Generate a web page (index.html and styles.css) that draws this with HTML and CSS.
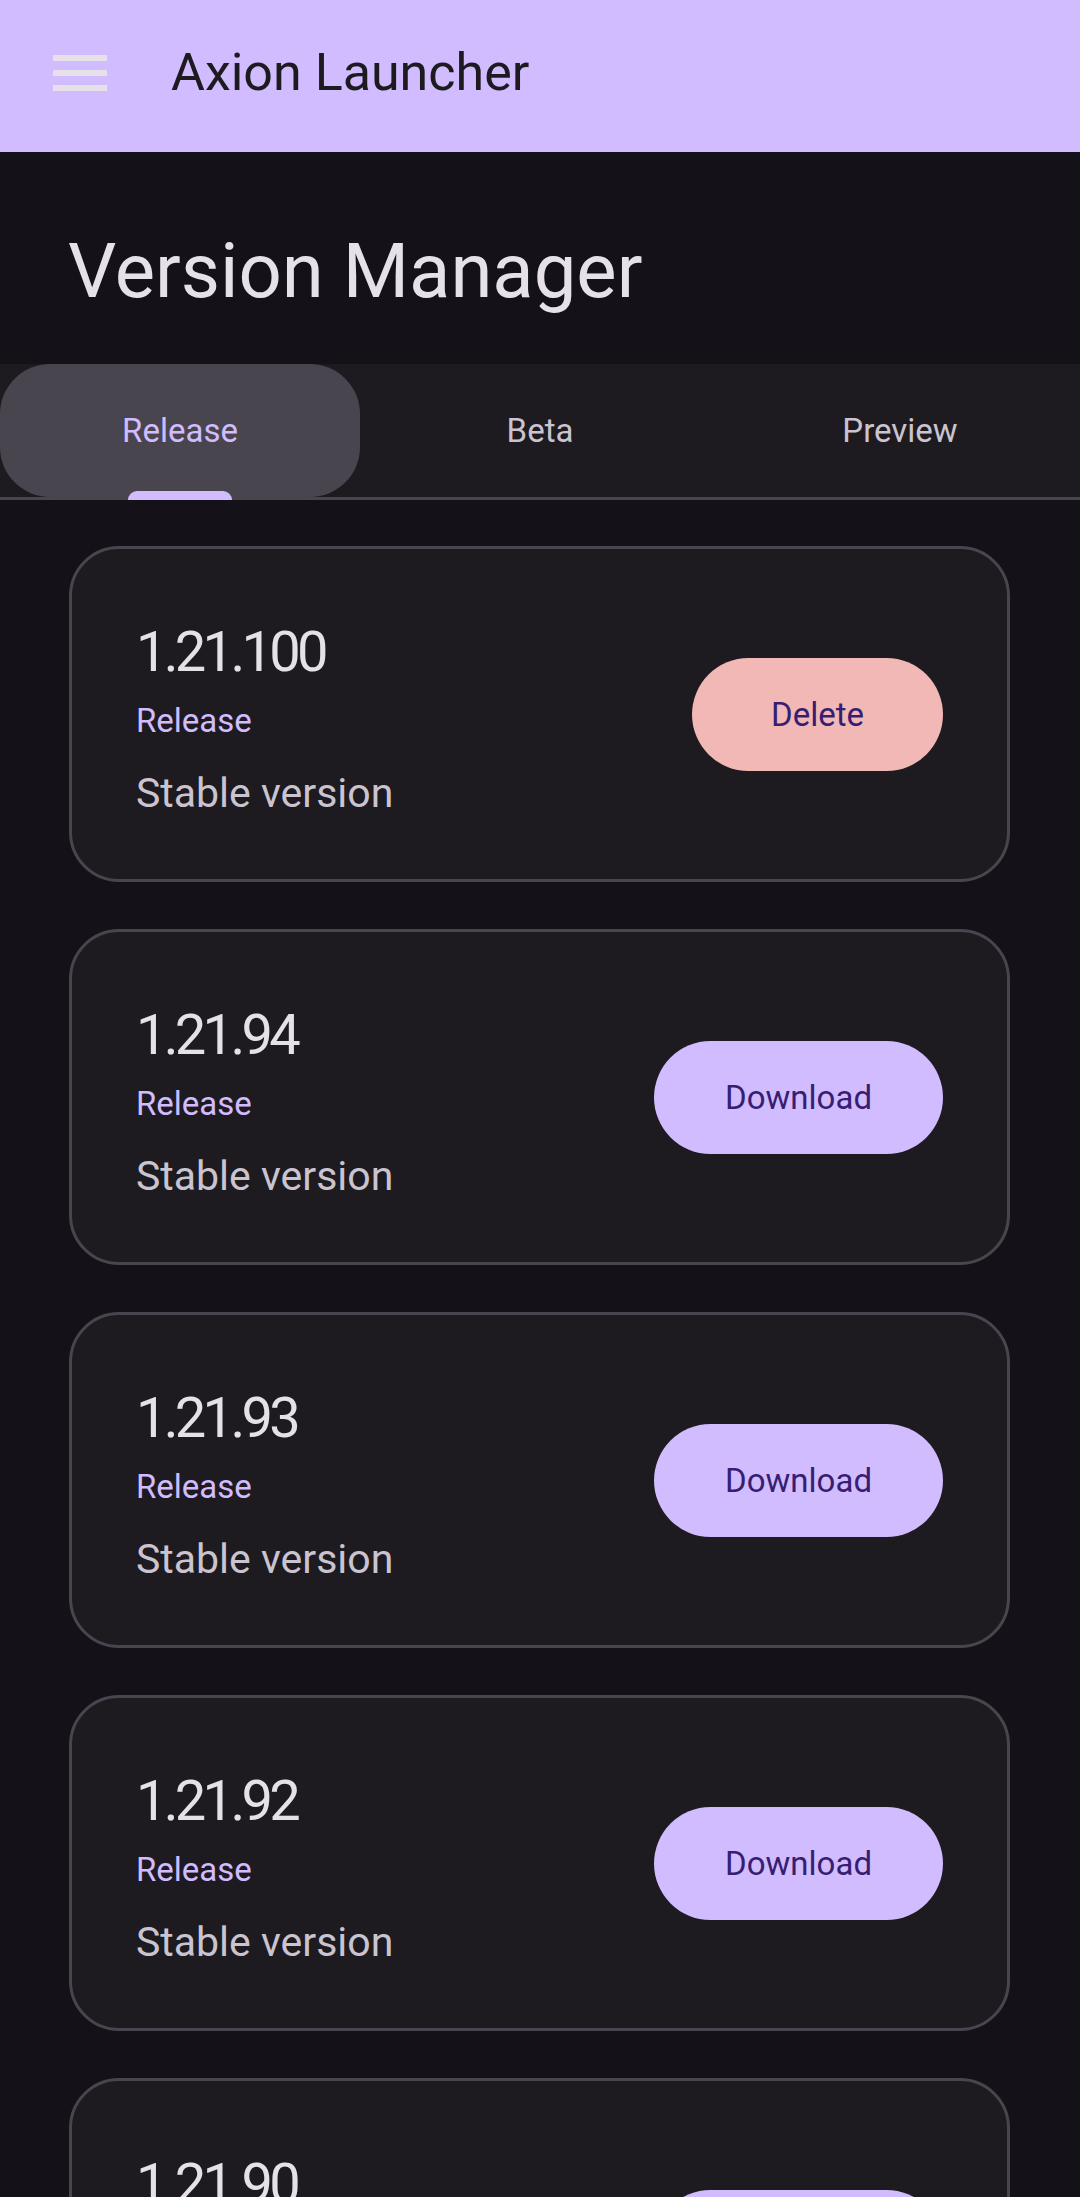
FILE: index.html
```html
<!DOCTYPE html>
<html lang="en">
<head>
    <meta charset="UTF-8">
    <meta name="viewport" content="width=device-width, initial-scale=1.0">
    <title>Axion Launcher</title>
    <link rel="stylesheet" href="styles.css">
</head>
<body>
    <header class="app-bar">
        <button class="menu-btn">
            <svg viewBox="0 0 24 24" width="72" height="72">
                <rect x="3" y="6" width="18" height="2" fill="#e6e0e9"/>
                <rect x="3" y="11" width="18" height="2" fill="#e6e0e9"/>
                <rect x="3" y="16" width="18" height="2" fill="#e6e0e9"/>
            </svg>
        </button>
        <h2 class="app-title">Axion Launcher</h2>
    </header>

    <div class="page-head">
        <h1>Version Manager</h1>
    </div>

    <nav class="tabs">
        <div class="tab active">Release<span class="indicator"></span></div>
        <div class="tab">Beta</div>
        <div class="tab">Preview</div>
    </nav>

    <div class="version-list">
        <div class="version-card">
            <div class="version-info">
                <p class="version-num">1.21.100</p>
                <p class="version-type">Release</p>
                <p class="version-desc">Stable version</p>
            </div>
            <button class="action-btn delete-btn">Delete</button>
        </div>
        <div class="version-card">
            <div class="version-info">
                <p class="version-num">1.21.94</p>
                <p class="version-type">Release</p>
                <p class="version-desc">Stable version</p>
            </div>
            <button class="action-btn">Download</button>
        </div>
        <div class="version-card">
            <div class="version-info">
                <p class="version-num">1.21.93</p>
                <p class="version-type">Release</p>
                <p class="version-desc">Stable version</p>
            </div>
            <button class="action-btn">Download</button>
        </div>
        <div class="version-card">
            <div class="version-info">
                <p class="version-num">1.21.92</p>
                <p class="version-type">Release</p>
                <p class="version-desc">Stable version</p>
            </div>
            <button class="action-btn">Download</button>
        </div>
        <div class="version-card">
            <div class="version-info">
                <p class="version-num">1.21.90</p>
                <p class="version-type">Release</p>
                <p class="version-desc">Stable version</p>
            </div>
            <button class="action-btn">Download</button>
        </div>
    </div>
</body>
</html>
```

FILE: styles.css
```css
*{
    margin: 0px;
    padding: 0px;
    box-sizing: border-box;
}
body{
    background: #141218;
    font-family: Roboto, "Noto Sans", sans-serif;
    color: #e6e0e9;
}
.app-bar{
    height: 152px;
    background: #d0bcff;
    display: flex;
    align-items: center;
    padding: 0 0 6px 44px;
    gap: 55px;
}
.menu-btn{
    width: 72px;
    height: 72px;
    border: none;
    background: none;
    display: flex;
}
.app-title{
    font-size: 52px;
    font-weight: 400;
    color: #1d1b20;
    line-height: 64px;
}
.page-head{
    height: 212px;
    padding: 74px 0 0 68px;
}
.page-head h1{
    font-size: 76px;
    font-weight: 400;
    line-height: 90px;
    color: #e6e0e9;
}
.tabs{
    display: grid;
    grid-template-columns: 1fr 1fr 1fr;
    height: 136px;
    background: #1d1b20;
    border-bottom: 3px solid #49454f;
}
.tab{
    position: relative;
    display: flex;
    justify-content: center;
    align-items: center;
    font-size: 33px;
    color: #cac4d0;
}
.tab.active{
    background: #49454f;
    border-radius: 50px;
    color: #d0bcff;
}
.indicator{
    position: absolute;
    left: 128px;
    bottom: -3px;
    width: 104px;
    height: 9px;
    background: #d0bcff;
    border-radius: 9px 9px 0 0;
}
.version-list{
    display: flex;
    flex-direction: column;
    gap: 47px;
    padding: 46px 70px 0 69px;
}
.version-card{
    height: 336px;
    flex-shrink: 0;
    background: #1d1b20;
    border: 3px solid #49454f;
    border-radius: 50px;
    display: flex;
    justify-content: space-between;
    align-items: center;
    padding: 0 64px;
}
.version-info{
    padding-top: 8px;
}
.version-num{
    font-size: 56px;
    line-height: 64px;
    letter-spacing: -3.7px;
    color: #e6e0e9;
    margin-bottom: 17px;
}
.version-type{
    font-size: 33px;
    line-height: 40px;
    color: #d0bcff;
    margin-bottom: 28px;
}
.version-desc{
    font-size: 41px;
    line-height: 48px;
    color: #cac4d0;
}
.action-btn{
    height: 113px;
    padding: 0 71px;
    border: none;
    border-radius: 57px;
    background: #d0bcff;
    color: #381e72;
    font-family: Roboto, "Noto Sans", sans-serif;
    font-size: 33px;
}
.delete-btn{
    background: #f2b8b5;
    padding: 0 79px;
}
```
